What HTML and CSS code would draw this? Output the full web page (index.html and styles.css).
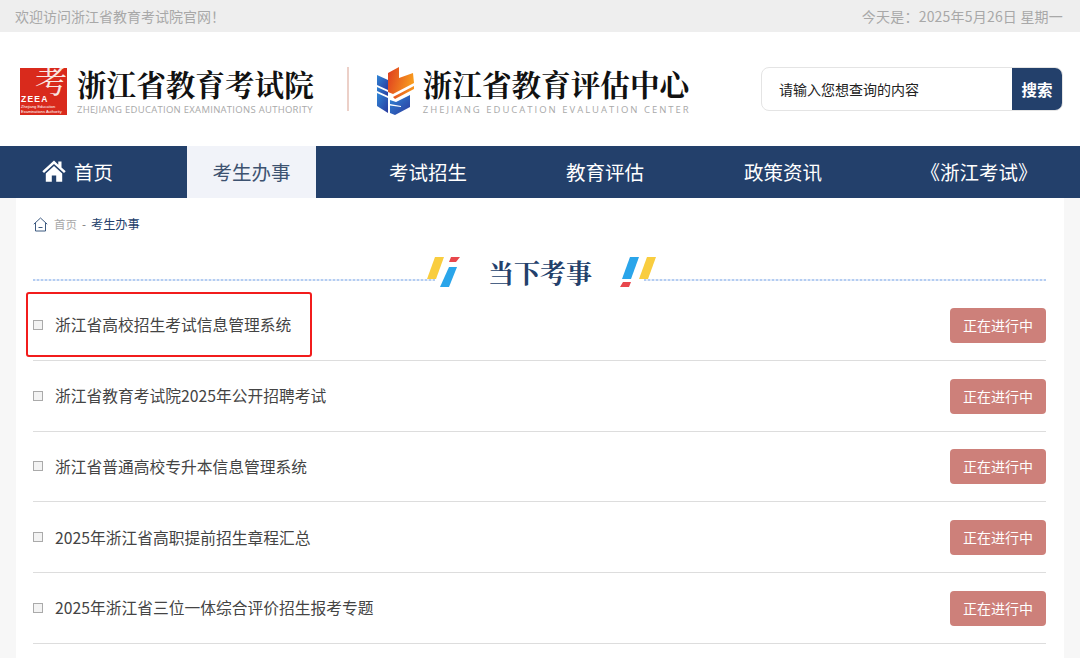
FILE: index.html
```html
<!DOCTYPE html>
<html lang="zh-CN">
<head>
<meta charset="utf-8">
<title>浙江省教育考试院</title>
<link rel="stylesheet" href="styles.css">
</head>
<body>
<div class="page">
  <div class="topbar">
    <span>欢迎访问浙江省教育考试院官网！</span>
    <span class="topbar-date">今天是：2025年5月26日 星期一</span>
  </div>
  <header class="header">
    <div class="brand brand-one">
      <div class="zeea">
        <span class="zeea-char">考</span>
        <span class="zeea-name">ZEEA</span>
        <span class="zeea-small">Zhejiang Education<br>Examinations Authority</span>
      </div>
      <div class="brand-text">
        <div class="brand-cn">浙江省教育考试院</div>
        <div class="brand-en en-one">ZHEJIANG EDUCATION EXAMINATIONS AUTHORITY</div>
      </div>
    </div>
    <div class="divider"></div>
    <div class="brand brand-two">
      <svg class="eval-logo" viewBox="0 0 38 49" width="38" height="49" aria-hidden="true">
        <defs>
          <linearGradient id="og" x1="0" y1="0" x2="1" y2="0.3"><stop offset="0" stop-color="#de3a20"/><stop offset="1" stop-color="#f79a1e"/></linearGradient>
          <linearGradient id="bl" x1="0" y1="0" x2="1" y2="1"><stop offset="0" stop-color="#2f86d6"/><stop offset="1" stop-color="#2b3a9e"/></linearGradient>
        </defs>
        <polygon fill="url(#og)" points="11,6 22,0 22,11 36,6 37,16 16,27 11,25"/>
        <polygon fill="url(#og)" points="16,30 37,19 37,22 18,32"/>
        <polygon fill="url(#bl)" points="0,8 11,13 11,23 0,18"/>
        <polygon fill="url(#bl)" points="0,20 11,25 11,29 0,24"/>
        <polygon fill="url(#bl)" points="0,26 11,31 11,46 0,39"/>
        <polygon fill="url(#bl)" points="13,33 19,35 33,28 33,40 18,48 13,46"/>
        <polygon fill="#fff" points="13,37 24,39 24,40 13,38.500"/>
      </svg>
      <div class="brand-text">
        <div class="brand-cn">浙江省教育评估中心</div>
        <div class="brand-en en-two">ZHEJIANG EDUCATION EVALUATION CENTER</div>
      </div>
    </div>
    <form class="search">
      <span class="search-input">请输入您想查询的内容</span>
      <span class="search-btn">搜索</span>
    </form>
  </header>
  <nav class="nav">
    <a class="nav-item nav-first">
      <svg class="nav-home" viewBox="0 0 24 22" width="24" height="22" aria-hidden="true">
        <path fill="#fff" d="M12 0.5 0.3 11.2l1.7 1.9L12 4l10 9.100 1.700-1.900-4.200-3.800V1.500h-3.200v3.200L12 0.500z"/>
        <path fill="#fff" d="M12 6 3.800 13.400V21.800h6V15.500h4.400v6.300h6V13.400L12 6z"/>
      </svg>
      首页
    </a>
    <a class="nav-item active">考生办事</a>
    <a class="nav-item">考试招生</a>
    <a class="nav-item">教育评估</a>
    <a class="nav-item">政策资讯</a>
    <a class="nav-item nav-last">《浙江考试》</a>
  </nav>
  <main class="main">
    <div class="crumb">
      <svg class="crumb-home" viewBox="0 0 15 15" width="15" height="15" aria-hidden="true">
        <path fill="none" stroke="#3d5a80" stroke-width="1" d="M0.800 7.200 7.500 1l6.700 6.200M2.500 6v8h10V6"/>
        <path fill="none" stroke="#3d5a80" stroke-width="1" d="M5.500 10.500h4"/>
      </svg>
      <span class="crumb-link">首页</span>
      <span class="crumb-sep">-</span>
      <span class="crumb-now">考生办事</span>
    </div>
    <div class="title">
      <span class="title-line line-left"></span>
      <svg class="mark" viewBox="0 0 36 32" width="36" height="32" aria-hidden="true">
        <polygon fill="#f9cd3f" points="8,1 17,1 9,23 0,23"/>
        <polygon fill="#2aa5ea" points="22,11 30,11 22,31 13,31"/>
        <polygon fill="#e8474c" points="24,1 33,1 29,6 22,6"/>
      </svg>
      <h2 class="title-text">当下考事</h2>
      <svg class="mark" viewBox="0 0 36 32" width="36" height="32" aria-hidden="true">
        <polygon fill="#2aa5ea" points="10,1 19,1 11,23 2,23"/>
        <polygon fill="#e8474c" points="3,26 11,26 9,31 0,31"/>
        <polygon fill="#f9cd3f" points="27,1 36,1 28,23 19,23"/>
      </svg>
      <span class="title-line line-right"></span>
    </div>
    <ul class="list">
      <li class="row"><span class="bullet"></span><span class="row-text">浙江省高校招生考试信息管理系统</span><span class="badge">正在进行中</span></li>
      <li class="row"><span class="bullet"></span><span class="row-text">浙江省教育考试院2025年公开招聘考试</span><span class="badge">正在进行中</span></li>
      <li class="row"><span class="bullet"></span><span class="row-text">浙江省普通高校专升本信息管理系统</span><span class="badge">正在进行中</span></li>
      <li class="row"><span class="bullet"></span><span class="row-text">2025年浙江省高职提前招生章程汇总</span><span class="badge">正在进行中</span></li>
      <li class="row"><span class="bullet"></span><span class="row-text">2025年浙江省三位一体综合评价招生报考专题</span><span class="badge">正在进行中</span></li>
    </ul>
    <div class="highlight"></div>
  </main>
</div>
</body>
</html>
```

FILE: styles.css
```css
* { box-sizing: border-box; }
html, body { margin: 0; padding: 0; height: 100%; overflow: hidden; }
body {
  font-family: "Noto Sans CJK SC", "Noto Sans", sans-serif;
  background: #f7f7f7;
  color: #333;
}
.page { display: flex; flex-direction: column; height: 658px; }

.topbar {
  height: 32px;
  flex: none;
  background: #eeeeee;
  display: flex;
  justify-content: space-between;
  align-items: center;
  padding: 0 17px 1px 15px;
  font-size: 14px;
  color: #a8a8a8;
}
.topbar-date { letter-spacing: 0.200px; }

.header {
  height: 114px;
  flex: none;
  background: #fff;
  display: flex;
  align-items: flex-start;
  padding: 35px 17px 0 20px;
}
.brand { display: flex; }
.zeea {
  position: relative;
  width: 47px;
  height: 47px;
  margin-top: 1px;
  background: #d92a1c;
  overflow: hidden;
  color: #fff;
}
.zeea-char {
  position: absolute;
  left: 15px;
  top: -5px;
  font-family: "Noto Serif CJK SC", "Liberation Serif", "Noto Sans CJK SC", serif;
  font-size: 32px;
  line-height: 32px;
  color: #f9e6e2;
}
.zeea-name {
  position: absolute;
  left: 1px;
  top: 27px;
  font-family: "Liberation Sans", sans-serif;
  font-weight: 700;
  font-size: 8.500px;
  line-height: 9px;
  letter-spacing: 1.200px;
}
.zeea-small {
  position: absolute;
  left: 1px;
  top: 36px;
  font-family: "Liberation Sans", sans-serif;
  font-size: 4px;
  line-height: 5px;
  white-space: nowrap;
}
.brand-text { margin-left: 10px; }
.brand-cn {
  font-family: "Noto Serif CJK SC", "Liberation Serif", "Noto Sans CJK SC", serif;
  font-weight: 700;
  font-size: 29.600px;
  line-height: 32px;
  color: #111;
  white-space: nowrap;
}
.brand-en {
  font-family: "Open Sans", sans-serif;
  font-size: 9.500px;
  line-height: 13px;
  margin-top: 4px;
  color: #a9a9a9;
  white-space: nowrap;
}
.en-one { letter-spacing: 0.280px; }
.en-two { letter-spacing: 2px; }
.divider {
  width: 2px;
  height: 44px;
  margin: 0 28px 0 33px;
  background: #ecd0c8;
}
.brand-two .brand-text { margin-left: 8px; }
.eval-logo { margin-top: 0; flex: none; }

.search {
  margin: 0 0 0 auto;
  width: 302px;
  height: 44px;
  display: flex;
  border: 1px solid #e4e4e4;
  border-radius: 8px;
  overflow: hidden;
  background: #fff;
}
.search-input {
  flex: 1;
  padding-left: 17px;
  font-size: 14px;
  line-height: 42px;
  color: #222;
}
.search-btn {
  width: 50px;
  background: #23406b;
  color: #fff;
  text-align: center;
  font-size: 15.500px;
  font-weight: 700;
  line-height: 42px;
}

.nav {
  height: 52px;
  flex: none;
  background: #23406b;
  display: grid;
  grid-template-columns: 187px 129px 224px 130px 226px 184px;
  color: #fff;
  font-size: 19.500px;
}
.nav-item {
  display: flex;
  align-items: center;
  justify-content: center;
  gap: 8px;
  padding-bottom: 2px;
}
.nav-first { padding-right: 32px; }
.nav-last { padding-right: 18px; }
.nav-item.active { background: #f1f3f9; color: #3d5270; }
.nav-home { flex: none; margin-top: 0; }

.main {
  position: relative;
  flex: 1;
  margin: 0 16px;
  padding: 0 18px 0 17px;
  background: #fff;
  overflow: hidden;
}
.crumb {
  height: 20px;
  margin-top: 16px;
  display: flex;
  align-items: center;
  font-size: 11.500px;
  line-height: 20px;
}
.crumb-home { flex: none; margin-right: 6px; }
.crumb-link { color: #a8a8a8; }
.crumb-sep { color: #777; margin: 0 5px; }
.crumb-now { color: #23406b; font-size: 12.200px; }

.title {
  display: flex;
  align-items: flex-start;
  height: 36px;
  margin-top: 22px;
}
.title-line {
  flex: 1;
  height: 2px;
  margin-top: 23px;
  background-image: repeating-linear-gradient(90deg, #b4cdf2 0 2px, #e4ecf9 2px 4px);
}
.line-left { margin-right: -8px; }
.line-right { margin-left: -12px; }
.mark { flex: none; position: relative; z-index: 1; }
.title-text {
  margin: 0;
  width: 157px;
  padding-right: 3px;
  text-align: center;
  font-family: "Noto Serif CJK SC", "Liberation Serif", "Noto Sans CJK SC", serif;
  font-weight: 700;
  font-size: 26px;
  line-height: 32px;
  color: #23406b;
}

.list { list-style: none; margin: -2px 0 0; padding: 0; }
.row {
  height: 70.750px;
  display: flex;
  align-items: center;
  border-bottom: 1px solid #dddddd;
}
.bullet {
  width: 10px;
  height: 10px;
  border: 1px solid #aaa;
  background: #f3f3f3;
  flex: none;
  margin-right: 12px;
}
.row-text { flex: 1; font-size: 15.750px; color: #444; }
.badge {
  width: 96px;
  height: 35px;
  margin-top: 1px;
  border-radius: 4px;
  background: #cd807a;
  color: #fff;
  font-size: 14px;
  line-height: 35px;
  text-align: center;
}

.highlight {
  position: absolute;
  left: 10px;
  top: 94px;
  width: 286px;
  height: 65px;
  border: 2px solid #f21c1c;
  border-radius: 3px;
}
```
